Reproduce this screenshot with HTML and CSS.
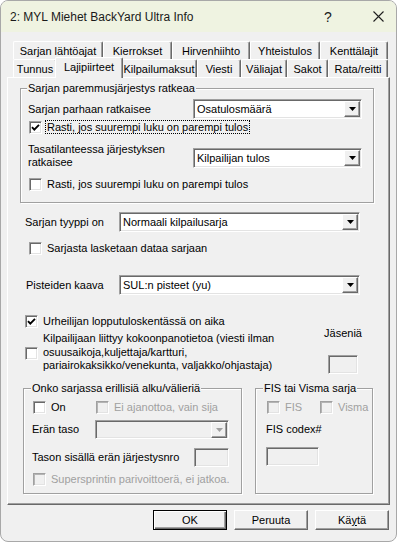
FILE: index.html
```html
<!DOCTYPE html>
<html lang="fi">
<head>
    <meta charset="UTF-8">
    <title>2: MYL Miehet BackYard Ultra Info</title>
    <link rel="stylesheet" href="styles.css">
</head>
<body>
    <div class="window">
        <div class="titlebar">
            <span class="title">2: MYL Miehet BackYard Ultra Info</span>
            <span class="help">?</span>
            <span class="close">
                <svg width="11" height="11" viewBox="0 0 11 11"><path d="M0.5 0.5L10.5 10.5M10.5 0.5L0.5 10.5" stroke="#1f1f1f" stroke-width="1.1"/></svg>
            </span>
        </div>
        <div class="dialog">
            <div class="tabs">
                <div class="tab-row">
                    <div class="tab tab-lahto">Sarjan lähtöajat</div>
                    <div class="tab tab-kierr">Kierrokset</div>
                    <div class="tab tab-hirvi">Hirvenhiihto</div>
                    <div class="tab tab-yhteis">Yhteistulos</div>
                    <div class="tab tab-kentta">Kenttälajit</div>
                </div>
                <div class="tab-row">
                    <div class="tab tab-tunnus">Tunnus</div>
                    <div class="tab tab-laji active">Lajipiirteet</div>
                    <div class="tab tab-maksut">Kilpailumaksut</div>
                    <div class="tab tab-viesti">Viesti</div>
                    <div class="tab tab-vali">Väliajat</div>
                    <div class="tab tab-sakot">Sakot</div>
                    <div class="tab tab-rata">Rata/reitti</div>
                </div>
            </div>

            <div class="panel">
                <div class="group group-rank">
                    <span class="group-title">Sarjan paremmusjärjestys ratkeaa</span>
                    <div class="field-row first">
                        <span class="lbl lbl-rank">Sarjan parhaan ratkaisee</span>
                        <div class="combo combo-rank">
                            <span class="combo-value">Osatulosmäärä</span>
                            <span class="combo-btn"><svg width="7" height="4" viewBox="0 0 7 4"><polygon points="0,0 7,0 3.5,4" fill="#000"/></svg></span>
                        </div>
                    </div>
                    <label class="check check-a">
                        <span class="box"><svg width="9" height="9" viewBox="0 0 9 9"><polyline points="1,4.2 3.3,6.6 8,1.8" fill="none" stroke="#000" stroke-width="1.9"/></svg></span>
                        <span class="focus">Rasti, jos suurempi luku on parempi tulos</span>
                    </label>
                    <div class="field-row tie">
                        <span class="lbl lbl-rank two-line">Tasatilanteessa järjestyksen<br>ratkaisee</span>
                        <div class="combo combo-rank">
                            <span class="combo-value">Kilpailijan tulos</span>
                            <span class="combo-btn"><svg width="7" height="4" viewBox="0 0 7 4"><polygon points="0,0 7,0 3.5,4" fill="#000"/></svg></span>
                        </div>
                    </div>
                    <label class="check check-b">
                        <span class="box"></span>
                        <span>Rasti, jos suurempi luku on parempi tulos</span>
                    </label>
                </div>

                <div class="field-row row-type">
                    <span class="lbl lbl-wide">Sarjan tyyppi on</span>
                    <div class="combo combo-wide">
                        <span class="combo-value">Normaali kilpailusarja</span>
                        <span class="combo-btn"><svg width="7" height="4" viewBox="0 0 7 4"><polygon points="0,0 7,0 3.5,4" fill="#000"/></svg></span>
                    </div>
                </div>
                <label class="check check-data">
                    <span class="box"></span>
                    <span>Sarjasta lasketaan dataa sarjaan</span>
                </label>

                <div class="field-row row-points">
                    <span class="lbl lbl-points">Pisteiden kaava</span>
                    <div class="combo combo-wide">
                        <span class="combo-value">SUL:n pisteet (yu)</span>
                        <span class="combo-btn"><svg width="7" height="4" viewBox="0 0 7 4"><polygon points="0,0 7,0 3.5,4" fill="#000"/></svg></span>
                    </div>
                </div>

                <label class="check check-time">
                    <span class="box"><svg width="9" height="9" viewBox="0 0 9 9"><polyline points="1,4.2 3.3,6.6 8,1.8" fill="none" stroke="#000" stroke-width="1.9"/></svg></span>
                    <span>Urheilijan lopputuloskentässä on aika</span>
                </label>

                <div class="members-row">
                    <span class="box"></span>
                    <span class="members-text">Kilpailijaan liittyy kokoonpanotietoa (viesti ilman<br>osuusaikoja,kuljettaja/kartturi,<br>pariairokaksikko/venekunta, valjakko/ohjastaja)</span>
                    <div class="members-col">
                        <span>Jäseniä</span>
                        <span class="edit edit-members"></span>
                    </div>
                </div>

                <div class="bottom-groups">
                    <div class="group group-heats">
                        <span class="group-title">Onko sarjassa erillisiä alku/välieriä</span>
                        <div class="check-line">
                            <label class="check check-on">
                                <span class="box"></span>
                                <span>On</span>
                            </label>
                            <label class="check disabled">
                                <span class="box"></span>
                                <span>Ei ajanottoa, vain sija</span>
                            </label>
                        </div>
                        <div class="field-row row-level">
                            <span class="lbl lbl-level">Erän taso</span>
                            <div class="combo combo-level disabled">
                                <span class="combo-value"></span>
                                <span class="combo-btn"><svg width="7" height="4" viewBox="0 0 7 4"><polygon points="0,0 7,0 3.5,4" fill="#a0a0a0"/></svg></span>
                            </div>
                        </div>
                        <div class="field-row row-order">
                            <span class="lbl lbl-order">Tason sisällä erän järjestysnro</span>
                            <span class="edit edit-order"></span>
                        </div>
                        <label class="check disabled check-super">
                            <span class="box"></span>
                            <span>Supersprintin parivoittoerä, ei jatkoa.</span>
                        </label>
                    </div>

                    <div class="group group-fis">
                        <span class="group-title">FIS tai Visma sarja</span>
                        <div class="check-line fis-line">
                            <label class="check disabled check-fis">
                                <span class="box"></span>
                                <span>FIS</span>
                            </label>
                            <label class="check disabled">
                                <span class="box"></span>
                                <span>Visma</span>
                            </label>
                        </div>
                        <span class="fis-label">FIS codex#</span>
                        <span class="edit edit-fis"></span>
                    </div>
                </div>
            </div>

            <div class="buttons">
                <button type="button" class="btn default">OK</button>
                <button type="button" class="btn">Peruuta</button>
                <button type="button" class="btn">Kä<u>y</u>tä</button>
            </div>
        </div>
    </div>
</body>
</html>
```

FILE: styles.css
```css
* {
    box-sizing: border-box;
}
body {
    margin: 0;
    background: #fff;
    font-family: "Liberation Sans", Arial, sans-serif;
    font-size: 11px;
    color: #000;
}
.window {
    width: 397px;
    height: 542px;
    border: 1px solid #a8a8a8;
    border-radius: 8px;
    overflow: hidden;
    background: #f0f0f0;
}

/* title bar */
.titlebar {
    height: 31px;
    background: #eff3e1;
    display: flex;
    align-items: center;
    padding-left: 9px;
    font-size: 12px;
    color: #1a1a1a;
}
.title {
    flex: 1;
}
.help {
    width: 20px;
    margin-right: 22px;
    text-align: center;
    font-size: 14px;
}
.close {
    width: 36px;
    display: flex;
    justify-content: center;
}

/* tabs */
.dialog {
    padding: 9px 6px 0;
}
.tabs {
    padding-left: 6px;
}
.tab-row {
    display: flex;
    align-items: flex-start;
    height: 18px;
}
.tab {
    height: 18px;
    border: 1px solid;
    border-color: #fff #696969 transparent #fff;
    border-bottom: none;
    border-radius: 2px 2px 0 0;
    box-shadow: inset -1px 0 #a0a0a0;
    background: #f0f0f0;
    display: flex;
    align-items: center;
    justify-content: center;
    white-space: nowrap;
}
.tab.active {
    position: relative;
    z-index: 1;
    height: 21px;
    margin: -2px -2px -1px;
    padding-bottom: 2px;
}
.tab-lahto { width: 90px; }
.tab-kierr { width: 69px; }
.tab-hirvi { width: 78px; }
.tab-yhteis { width: 70px; }
.tab-kentta { width: 68px; }
.tab-tunnus { width: 44px; }
.tab-laji { width: 68px; }
.tab-maksut { width: 76px; }
.tab-viesti { width: 44px; }
.tab-vali { width: 46px; }
.tab-sakot { width: 41px; }
.tab-rata { width: 60px; }

.panel {
    height: 428px;
    border: 1px solid;
    border-color: #fff #696969 #696969 #fff;
    box-shadow: inset -1px -1px #a0a0a0;
}

/* group boxes */
.group {
    border: 1px solid #a0a0a0;
    box-shadow: inset 1px 1px #fff, 1px 1px #fff;
}
.group-title {
    display: block;
    width: max-content;
    margin: -7px 0 0 -1px;
    padding: 0 1px;
    line-height: 13px;
    background: #f0f0f0;
}
.group-rank {
    width: 354px;
    margin: 10px 0 0 12px;
    padding: 0 0 11px 7px;
}

/* rows and controls */
.field-row {
    display: flex;
    align-items: center;
    height: 20px;
}
.field-row.first {
    margin-top: 4px;
}
.field-row.tie {
    align-items: flex-start;
    height: 26px;
    margin-top: 9px;
}
.field-row.tie .combo {
    margin-top: 5px;
}
.lbl {
    flex: none;
    line-height: 13px;
    white-space: nowrap;
}
.lbl-rank { width: 165px; }
.lbl-wide { width: 94px; }
.lbl-points { width: 93px; }
.lbl-level { width: 63px; }
.lbl-order { width: 162px; }

.combo {
    display: flex;
    align-items: center;
    height: 20px;
    border: 1px solid;
    border-color: #a0a0a0 #fff #fff #a0a0a0;
    box-shadow: inset 1px 1px #696969, inset -1px -1px #e3e3e3;
    background: #fff;
    padding: 1px;
}
.combo-value {
    flex: 1;
    padding-left: 2px;
    white-space: nowrap;
}
.combo-btn {
    width: 16px;
    height: 16px;
    display: flex;
    align-items: center;
    justify-content: center;
    border: 1px solid;
    border-color: #fff #696969 #696969 #fff;
    box-shadow: inset -1px -1px #a0a0a0;
    background: #f0f0f0;
}
.combo.disabled {
    background: #f0f0f0;
}
.combo-rank { width: 169px; }
.combo-wide { width: 241px; }
.combo-level {
    width: 134px;
    height: 19px;
}

.edit {
    display: block;
    height: 19px;
    border: 1px solid;
    border-color: #a0a0a0 #fff #fff #a0a0a0;
    box-shadow: inset 1px 1px #696969, inset -1px -1px #e3e3e3;
    background: #f0f0f0;
}
.edit-order { width: 35px; }
.edit-members {
    width: 30px;
    margin-top: 15px;
}
.edit-fis {
    width: 53px;
    margin: 11px 0 0 2px;
}

.check {
    display: flex;
    align-items: center;
    gap: 5px;
    height: 14px;
    white-space: nowrap;
}
.box {
    flex: none;
    width: 13px;
    height: 13px;
    display: flex;
    align-items: center;
    justify-content: center;
    border: 1px solid;
    border-color: #a0a0a0 #fff #fff #a0a0a0;
    box-shadow: inset 1px 1px #696969, inset -1px -1px #e3e3e3;
    background: #fff;
}
.check.disabled {
    color: #a0a0a0;
}
.check.disabled .box {
    background: #f0f0f0;
    box-shadow: inset 1px 1px #b4b4b4, inset -1px -1px #e3e3e3;
}
.focus {
    margin-left: -2px;
    padding: 0 1px;
    border: 1px dotted #000;
    line-height: 12px;
}
.check-a {
    margin: 1px 0 0 1px;
}
.check-b {
    margin: 8px 0 0 1px;
}

.row-type {
    margin: 9px 0 0 17px;
}
.check-data {
    margin: 9px 0 0 21px;
}
.row-points {
    margin: 20px 0 0 18px;
}
.check-time {
    margin: 19px 0 0 17px;
}

.members-row {
    display: flex;
    align-items: center;
    margin: 4px 0 0 17px;
    padding-right: 28px;
}
.members-text {
    align-self: flex-start;
    margin-left: 5px;
    line-height: 13.5px;
    white-space: nowrap;
}
.members-col {
    align-self: flex-start;
    display: flex;
    flex-direction: column;
    align-items: center;
    width: 36px;
    margin: -5px 0 0 auto;
    line-height: 13px;
}

/* bottom group boxes */
.bottom-groups {
    display: flex;
    gap: 13px;
    margin: 14px 0 0 15px;
}
.group-heats {
    width: 219px;
    padding: 0 0 7px 8px;
}
.group-fis {
    width: 118px;
    padding: 0 0 7px 8px;
}
.check-line {
    display: flex;
    margin: 5px 0 0 1px;
}
.check-on { width: 63px; }
.row-level {
    height: 19px;
    margin-top: 6px;
}
.row-order {
    height: 19px;
    margin-top: 9px;
}
.check-super {
    margin: 5px 0 0 1px;
}
.fis-line {
    margin-left: 3px;
}
.check-fis { width: 53px; }
.fis-label {
    display: block;
    margin: 9px 0 0 2px;
    line-height: 13px;
}

/* dialog buttons */
.buttons {
    display: flex;
    justify-content: flex-end;
    gap: 7px;
    margin: 5px 1px 0 0;
}
.btn {
    width: 74px;
    height: 20px;
    padding: 0;
    font: inherit;
    color: #000;
    background: #f0f0f0;
    border: 1px solid;
    border-color: #fff #696969 #696969 #fff;
    box-shadow: inset -1px -1px #a0a0a0;
}
.btn.default {
    border-color: #000;
    box-shadow: inset 1px 1px #fff, inset -1px -1px #696969, inset -2px -2px #a0a0a0;
}
```
